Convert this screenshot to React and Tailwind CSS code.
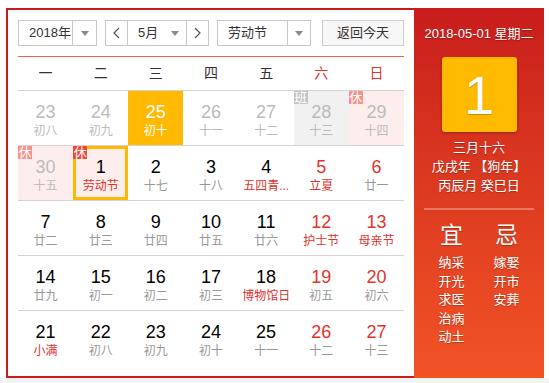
import React from 'react'

const font = { fontFamily: '"Liberation Sans", "Noto Sans CJK SC", sans-serif' }

// 每个格子: n=日期, l=农历/节日, t=类型
const rows = [
  [
    { n: 23, l: '初八', other: true },
    { n: 24, l: '初九', other: true },
    { n: 25, l: '初十', today: true },
    { n: 26, l: '十一', other: true },
    { n: 27, l: '十二', other: true },
    { n: 28, l: '十三', other: true, work: true },
    { n: 29, l: '十四', other: true, rest: 'light' },
  ],
  [
    { n: 30, l: '十五', other: true, rest: 'light' },
    { n: 1, l: '劳动节', fest: true, rest: 'strong', selected: true },
    { n: 2, l: '十七' },
    { n: 3, l: '十八' },
    { n: 4, l: '五四青...', fest: true },
    { n: 5, l: '立夏', fest: true, weekend: true },
    { n: 6, l: '廿一', weekend: true },
  ],
  [
    { n: 7, l: '廿二' },
    { n: 8, l: '廿三' },
    { n: 9, l: '廿四' },
    { n: 10, l: '廿五' },
    { n: 11, l: '廿六' },
    { n: 12, l: '护士节', fest: true, weekend: true },
    { n: 13, l: '母亲节', fest: true, weekend: true },
  ],
  [
    { n: 14, l: '廿九' },
    { n: 15, l: '初一' },
    { n: 16, l: '初二' },
    { n: 17, l: '初三' },
    { n: 18, l: '博物馆日', fest: true },
    { n: 19, l: '初五', weekend: true },
    { n: 20, l: '初六', weekend: true },
  ],
  [
    { n: 21, l: '小满', fest: true },
    { n: 22, l: '初八' },
    { n: 23, l: '初九' },
    { n: 24, l: '初十' },
    { n: 25, l: '十一' },
    { n: 26, l: '十二', weekend: true },
    { n: 27, l: '十三', weekend: true },
  ],
]

const weekdays = ['一', '二', '三', '四', '五', '六', '日']

function Caret() {
  return (
    <svg width="8" height="5" viewBox="0 0 8 5">
      <path d="M0 0h8L4 5z" fill="#8a8a8a" />
    </svg>
  )
}

function Chevron({ dir }) {
  return (
    <svg width="7" height="12" viewBox="0 0 7 12">
      <polyline
        points={dir === 'left' ? '6,1 1,6 6,11' : '1,1 6,6 1,11'}
        fill="none"
        stroke="#555"
        strokeWidth="1.2"
      />
    </svg>
  )
}

function Cell({ c }) {
  let bg = ''
  if (c.today) bg = 'bg-[#ffb900]'
  else if (c.work) bg = 'bg-[#f1f1f1]'
  else if (c.rest) bg = 'bg-[#fdeded]'

  let numColor = 'text-black'
  let lunarColor = 'text-[#999]'
  if (c.today) {
    numColor = 'text-white'
    lunarColor = 'text-white'
  } else if (c.other) {
    numColor = 'text-[#bbb]'
    lunarColor = 'text-[#bbb]'
  } else {
    if (c.weekend) numColor = 'text-[#e5322d]'
    if (c.fest) lunarColor = 'text-[#e5322d]'
  }

  return (
    <div className={`relative h-[54px] flex flex-col items-center pt-[11px] ${bg}`}>
      {c.selected && <div className="absolute inset-0 border-[3px] border-[#ffb900]" />}
      {c.rest && (
        <span
          className={`absolute z-10 top-0 left-0 w-[14px] h-[13px] flex items-center justify-center text-[13px] leading-none text-white ${
            c.rest === 'strong' ? 'bg-[#f4473b]' : 'bg-[#f7928b]'
          }`}
        >
          休
        </span>
      )}
      {c.work && (
        <span className="absolute z-10 top-0 left-0 w-[14px] h-[13px] flex items-center justify-center text-[13px] leading-none text-white bg-[#c4c4c4]">
          班
        </span>
      )}
      <span className={`text-[18px] leading-[20px] ${numColor}`}>{c.n}</span>
      <span className={`mt-[1px] text-[12px] leading-[16px] whitespace-nowrap ${lunarColor}`}>{c.l}</span>
    </div>
  )
}

export default function App() {
  return (
    <div className="w-[549px] h-[383px] bg-[#f4f4f4]" style={font}>
      <div className="h-[378px] bg-white pt-[8px] pl-[6px]">
        <div className="flex h-[370px]">
          {/* 左侧日历 */}
          <div className="w-[408px] h-full border-l-2 border-t-2 border-b-2 border-[#c91c1c] px-[10px] pt-[10px]">
            <div className="flex items-center h-[26px] text-[13px] text-[#333]">
              <div className="flex h-full w-[79px] border border-[#c8c8c8]">
                <div className="flex-1 flex items-center pl-[10px]">2018年</div>
                <div className="w-[24px] border-l border-[#c8c8c8] flex items-center justify-center">
                  <Caret />
                </div>
              </div>

              <div className="ml-[8px] flex h-full w-[104px] border border-[#c8c8c8]">
                <div className="w-[22px] border-r border-[#c8c8c8] flex items-center justify-center">
                  <Chevron dir="left" />
                </div>
                <div className="flex-1 flex items-center justify-between pl-[10px] pr-[7px]">
                  <span>5月</span>
                  <Caret />
                </div>
                <div className="w-[22px] border-l border-[#c8c8c8] flex items-center justify-center">
                  <Chevron dir="right" />
                </div>
              </div>

              <div className="ml-[8px] flex h-full w-[94px] border border-[#c8c8c8]">
                <div className="flex-1 flex items-center pl-[10px]">劳动节</div>
                <div className="w-[23px] border-l border-[#c8c8c8] flex items-center justify-center">
                  <Caret />
                </div>
              </div>

              <button className="ml-auto h-full w-[82px] border border-[#cfcfcf] bg-[#f7f7f7] text-[13px] text-[#333]">
                返回今天
              </button>
            </div>

            <div className="mt-[10px] h-px bg-[#f0604f]" />

            <div className="grid grid-cols-7 h-[33px] items-center text-[14px]">
              {weekdays.map((w, i) => (
                <div key={w} className={`text-center ${i >= 5 ? 'text-[#e5322d]' : 'text-[#333]'}`}>
                  {w}
                </div>
              ))}
            </div>

            {rows.map((row, ri) => (
              <div key={ri} className="grid grid-cols-7 border-t border-[#d3d3d3]">
                {row.map((c, ci) => (
                  <Cell key={ci} c={c} />
                ))}
              </div>
            ))}
          </div>

          {/* 右侧详情 */}
          <div className="w-[130px] h-full bg-linear-to-b from-[#c81c1c] to-[#f25325] flex flex-col items-center text-white [text-shadow:0_1px_1px_rgba(0,0,0,0.25)]">
            <div className="mt-[17px] text-[13px] leading-[18px] whitespace-nowrap">2018-05-01 星期二</div>
            <div className="mt-[14px] w-[75px] h-[75px] rounded-[3px] bg-[#ffba00] shadow-[0_1px_3px_rgba(0,0,0,0.3)] flex items-center justify-center text-[54px] leading-none">
              1
            </div>
            <div className="mt-[6px] text-[13px] leading-[19px] text-center">
              <div>三月十六</div>
              <div>戊戌年 【狗年】</div>
              <div>丙辰月 癸巳日</div>
            </div>
            <div className="mt-[13px] w-[110px] h-[2px] bg-white/30" />
            <div className="mt-[11px] flex gap-[25px]">
              <div className="w-[30px] flex flex-col items-center">
                <div className="text-[23px] leading-[28px]">宜</div>
                <div className="mt-[5px] text-[13px] leading-[18.5px] text-center">
                  <div>纳采</div>
                  <div>开光</div>
                  <div>求医</div>
                  <div>治病</div>
                  <div>动土</div>
                </div>
              </div>
              <div className="w-[30px] flex flex-col items-center">
                <div className="text-[23px] leading-[28px]">忌</div>
                <div className="mt-[5px] text-[13px] leading-[18.5px] text-center">
                  <div>嫁娶</div>
                  <div>开市</div>
                  <div>安葬</div>
                </div>
              </div>
            </div>
          </div>
        </div>
      </div>
    </div>
  )
}
